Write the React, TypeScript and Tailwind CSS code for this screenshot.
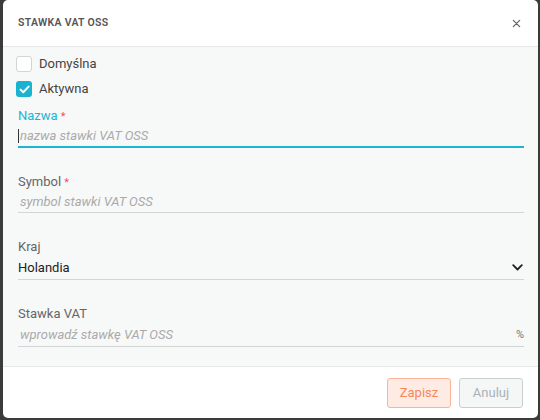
import React from 'react';

function Field({ label, required, active, children }: { label: string; required?: boolean; active?: boolean; children: React.ReactNode }) {
  return (
    <div className="flex flex-col">
      <div className={`h-[18px] leading-[18px] text-[13px] ${active ? 'text-[#1cb5d3]' : 'text-[#666]'}`}>
        {label}
        {required && <span className="text-[#f0506e] ml-[3px] text-[11px]">*</span>}
      </div>
      {children}
    </div>
  );
}

function App() {
  return (
    <div className="w-[540px] h-[420px] bg-[#3b3b3b] pl-[3px] pr-[2px] pb-[2px] font-['Roboto',sans-serif]">
      <div className="w-full h-full bg-white rounded-[5px] overflow-hidden flex flex-col">
        <div className="h-[47px] shrink-0 flex items-center justify-between px-[15px] border-b border-[#e6e8e8]">
          <span className="text-[10.5px] font-semibold text-[#555] tracking-[0.3px]">STAWKA VAT OSS</span>
          <svg width="9" height="9" viewBox="0 0 10 10" className="mr-[2px]">
            <path d="M1.5 1.5l7 7M8.5 1.5l-7 7" stroke="#666" strokeWidth="1.4" strokeLinecap="round" />
          </svg>
        </div>

        <div className="flex-1 bg-[#f7f8f8] pl-[15px] pr-[14px] pt-[9px] flex flex-col">
          <div className="flex flex-col gap-[9px] -ml-[2px]">
            <label className="flex items-center gap-[7px] h-[16px]">
              <span className="w-[16px] h-[16px] rounded-[3px] border border-[#cfd4d5] bg-white" />
              <span className="text-[13px] font-normal text-[#444]">Domyślna</span>
            </label>
            <label className="flex items-center gap-[7px] h-[16px]">
              <span className="w-[16px] h-[16px] rounded-[3px] bg-[#19b3cf] flex items-center justify-center">
                <svg width="11" height="9" viewBox="0 0 11 9">
                  <path d="M1.5 4.6l2.8 2.7L9.6 1.6" stroke="white" strokeWidth="2" fill="none" strokeLinecap="round" strokeLinejoin="round" />
                </svg>
              </span>
              <span className="text-[13px] font-normal text-[#444]">Aktywna</span>
            </label>
          </div>

          <div className="mt-[10px] flex flex-col gap-[25px]">
            <Field label="Nazwa" required active>
              <div className="h-[23px] border-b-2 border-[#1cb5d3] flex items-center">
                <span className="w-px h-[14px] bg-[#333] mr-[1px]" />
                <span className="text-[13px] italic text-[#aaa]">nazwa stawki VAT OSS</span>
              </div>
            </Field>
            <Field label="Symbol" required>
              <div className="h-[22px] border-b border-[#d4d6d6] flex items-center pl-[2px]">
                <span className="text-[13px] italic text-[#aaa]">symbol stawki VAT OSS</span>
              </div>
            </Field>
            <Field label="Kraj">
              <div className="h-[24px] border-b border-[#d4d6d6] flex items-center justify-between">
                <span className="text-[13px] text-[#222]">Holandia</span>
                <svg width="11" height="7" viewBox="0 0 11 7" className="mr-[1px]">
                  <path d="M1.2 1.2l4.3 4.3 4.3-4.3" stroke="#222" strokeWidth="1.8" fill="none" strokeLinecap="round" strokeLinejoin="round" />
                </svg>
              </div>
            </Field>
            <Field label="Stawka VAT">
              <div className="h-[24px] border-b border-[#d4d6d6] flex items-center justify-between pl-[2px]">
                <span className="text-[13px] italic text-[#aaa]">wprowadź stawkę VAT OSS</span>
                <span className="text-[11px] text-[#777] pt-[2px]">%</span>
              </div>
            </Field>
          </div>
        </div>

        <div className="h-[52px] shrink-0 border-t border-[#e8eaea] flex items-start justify-end gap-[8px] pt-[11px] pr-[15px]">
          <button type="button" className="w-[64px] h-[30px] rounded-[3px] border border-[#fab49a] bg-[#feebe3] text-[13px] text-[#f6875c]">
            Zapisz
          </button>
          <button type="button" className="w-[64px] h-[30px] rounded-[3px] border border-[#c7cfd1] bg-[#f5f7f7] text-[13px] text-[#a8b2b5]">
            Anuluj
          </button>
        </div>
      </div>
    </div>
  );
}

export default App;
